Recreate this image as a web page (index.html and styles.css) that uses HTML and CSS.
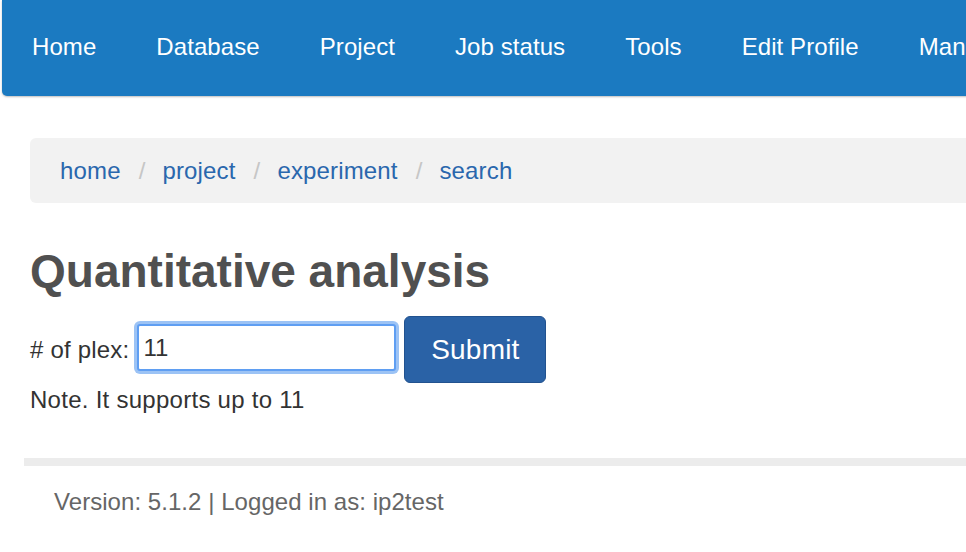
FILE: index.html
```html
<!DOCTYPE html>
<html lang="en">
<head>
<meta charset="utf-8">
<title>Quantitative analysis</title>
<link rel="stylesheet" href="styles.css">
</head>
<body>
<nav class="navbar">
  <a class="nav-link" href="#">Home</a>
  <a class="nav-link" href="#">Database</a>
  <a class="nav-link" href="#">Project</a>
  <a class="nav-link" href="#">Job status</a>
  <a class="nav-link" href="#">Tools</a>
  <a class="nav-link" href="#">Edit Profile</a>
  <a class="nav-link" href="#">Manage</a>
</nav>
<main class="main">
  <ol class="breadcrumb">
    <li><a href="#">home</a></li>
    <li class="sep">/</li>
    <li><a href="#">project</a></li>
    <li class="sep">/</li>
    <li><a href="#">experiment</a></li>
    <li class="sep">/</li>
    <li><a href="#">search</a></li>
  </ol>
  <h1 class="title">Quantitative analysis</h1>
  <form class="plex-form">
    <label class="plex-label" for="plex"># of plex:</label>
    <input class="plex-input" id="plex" type="text" value="11">
    <button class="btn-submit" type="button">Submit</button>
  </form>
  <p class="note">Note. It supports up to 11</p>
</main>
<footer class="footer">Version: 5.1.2 | Logged in as: ip2test</footer>
</body>
</html>
```
FILE: styles.css
```css
html, body {
  margin: 0;
  padding: 0;
  overflow: hidden;
}
body {
  font-family: "Liberation Sans", Arial, sans-serif;
  font-size: 24px;
  line-height: 34px;
  color: #333;
  background: #fff;
  width: 1400px;
}
a { text-decoration: none; }

.navbar {
  margin-left: 2px;
  height: 96px;
  background: #1b7ac1;
  border-radius: 0 0 5px 5px;
  box-shadow: 0 1px 2px rgba(0,0,0,0.25);
  display: flex;
  align-items: center;
  padding-bottom: 3px;
  box-sizing: border-box;
  letter-spacing: 0.08px;
}
.nav-link {
  color: #fff;
  padding: 0 30px;
  white-space: nowrap;
}

.main {
  padding: 0 30px;
}
.breadcrumb {
  list-style: none;
  margin: 42px 0 0 0;
  padding: 0 30px;
  height: 65px;
  background: #f2f2f2;
  border-radius: 6px;
  display: flex;
  align-items: center;
  letter-spacing: 0.15px;
}
.breadcrumb a { color: #2a67ad; }
.breadcrumb .sep {
  color: #c6c6c6;
  padding: 0 17px 0 18px;
}

.title {
  margin: 43px 0 0 0;
  font-size: 46px;
  line-height: 50px;
  font-weight: bold;
  color: #505050;
}

.plex-form {
  margin-top: 20px;
  display: flex;
  align-items: center;
  height: 67px;
}
.plex-label {
  margin-right: 8px;
  letter-spacing: 0.2px;
}
.plex-input {
  width: 259px;
  height: 47px;
  box-sizing: border-box;
  border: 2px solid #5f9ef2;
  border-radius: 3px;
  box-shadow: 0 0 0 3px #9cc3f5;
  padding: 0 4px;
  font-family: "Liberation Sans", Arial, sans-serif;
  font-size: 24px;
  color: #333;
  outline: none;
  margin-top: -4px;
}
.btn-submit {
  margin-left: 8px;
  width: 142px;
  height: 67px;
  background: #2a62a6;
  border: 1px solid #22528f;
  border-radius: 6px;
  color: #fff;
  font-family: "Liberation Sans", Arial, sans-serif;
  font-size: 28px;
  letter-spacing: 0.2px;
  padding: 0;
}
.note {
  margin: 0;
  letter-spacing: 0.27px;
}

.footer {
  margin-top: 41px;
  margin-left: 24px;
  border-top: 8px solid #ececec;
  padding: 19px 0 0 30px;
  color: #666;
  letter-spacing: 0.05px;
}
```
